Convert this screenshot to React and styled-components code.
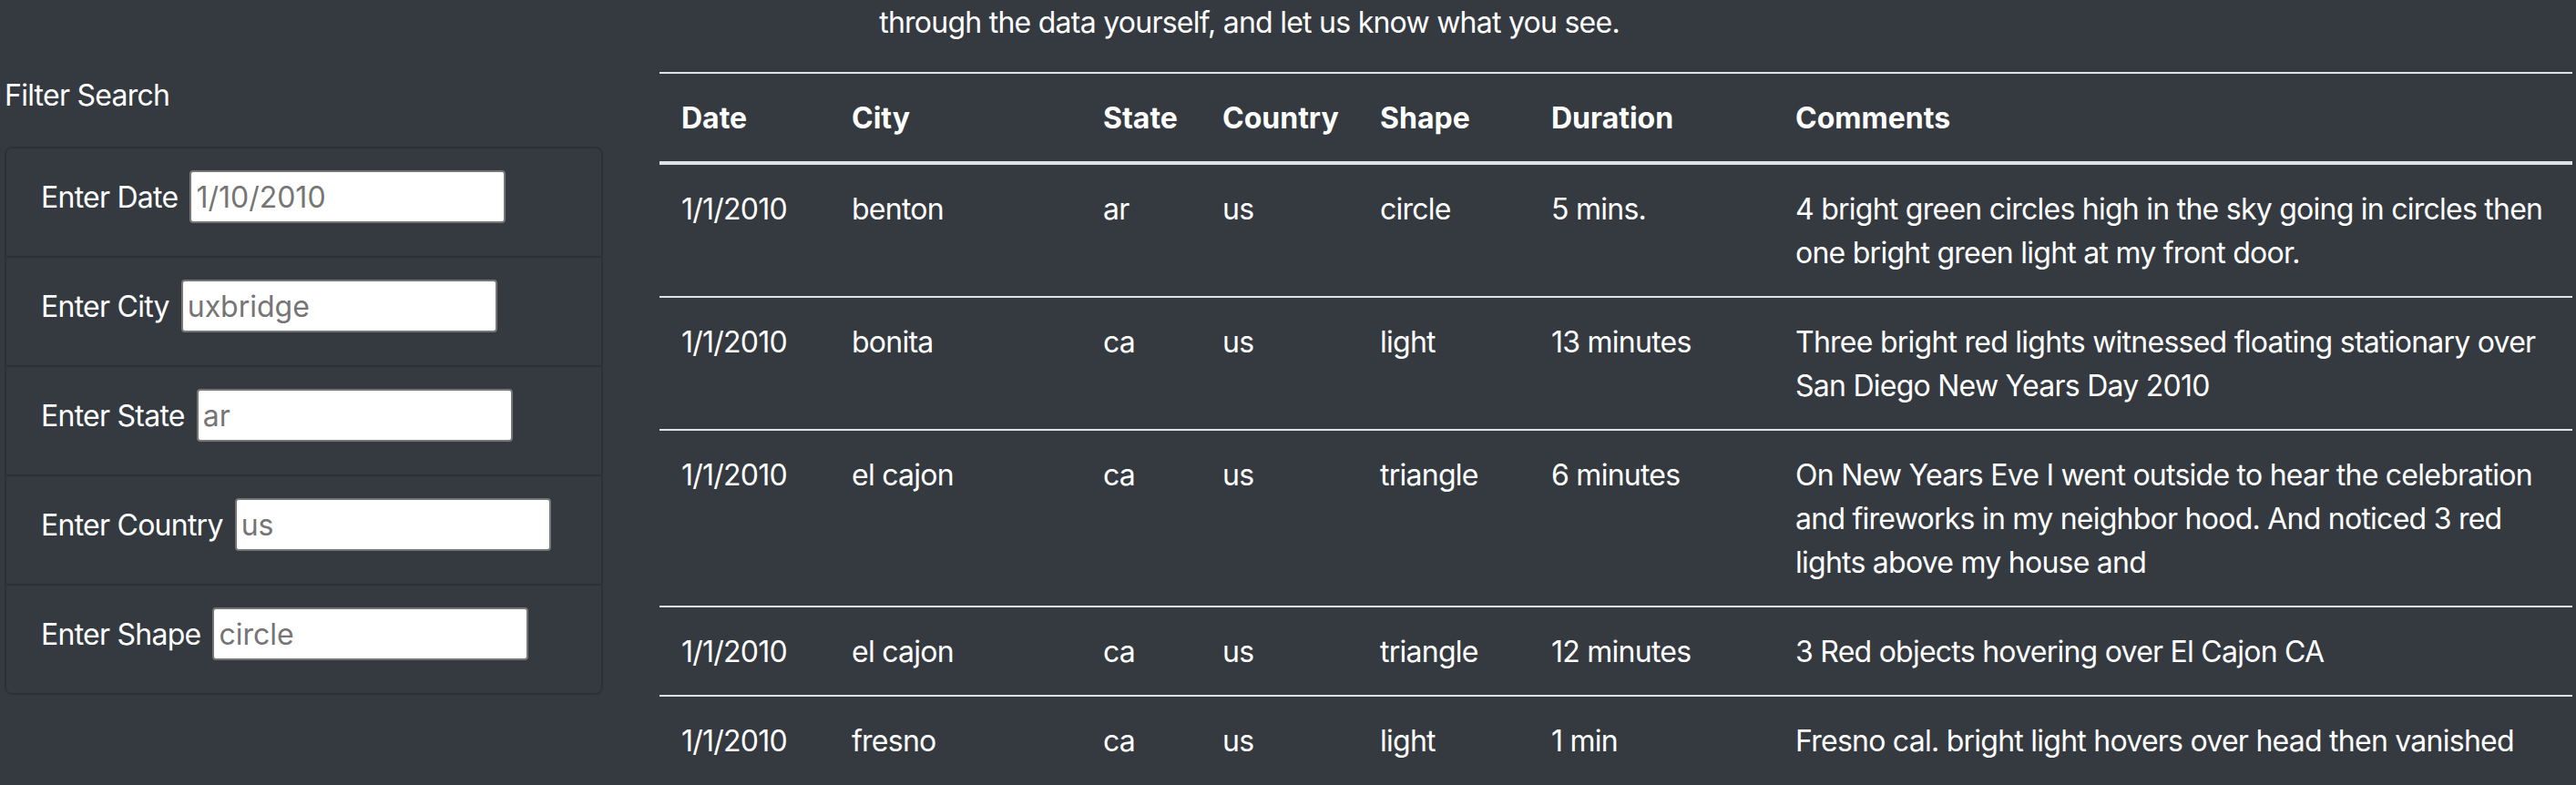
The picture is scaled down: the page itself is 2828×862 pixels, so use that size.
import React from "react";
import styled, { createGlobalStyle } from "styled-components";

const GlobalStyle = createGlobalStyle`
  html, body {
    margin: 0;
    background: #343a40;
    color: #fff;
    font-family: Inter, "Liberation Sans", sans-serif;
    font-size: 32px;
    line-height: 48px;
    letter-spacing: -0.75px;
  }
  * {
    box-sizing: border-box;
  }
`;

const filters = [
  { label: "Enter Date", placeholder: "1/10/2010" },
  { label: "Enter City", placeholder: "uxbridge" },
  { label: "Enter State", placeholder: "ar" },
  { label: "Enter Country", placeholder: "us" },
  { label: "Enter Shape", placeholder: "circle" },
];

const columns = [
  { title: "Date", width: 187 },
  { title: "City", width: 276 },
  { title: "State", width: 131 },
  { title: "Country", width: 173 },
  { title: "Shape", width: 188 },
  { title: "Duration", width: 268 },
  { title: "Comments", width: 877 },
];

const sightings = [
  ["1/1/2010", "benton", "ar", "us", "circle", "5 mins.", "4 bright green circles high in the sky going in circles then one bright green light at my front door."],
  ["1/1/2010", "bonita", "ca", "us", "light", "13 minutes", "Three bright red lights witnessed floating stationary over San Diego New Years Day 2010"],
  ["1/1/2010", "el cajon", "ca", "us", "triangle", "6 minutes", "On New Years Eve I went outside to hear the celebration and fireworks in my neighbor hood. And noticed 3 red lights above my house and"],
  ["1/1/2010", "el cajon", "ca", "us", "triangle", "12 minutes", "3 Red objects hovering over El Cajon CA"],
  ["1/1/2010", "fresno", "ca", "us", "light", "1 min", "Fresno cal. bright light hovers over head then vanished"],
];

export default function App() {
  return (
    <Page>
      <GlobalStyle />
      <Intro>through the data yourself, and let us know what you see.</Intro>
      <Layout>
        <Sidebar>
          <SidebarTitle>Filter Search</SidebarTitle>
          <FilterList>
            {filters.map(f => (
              <FilterItem key={f.label}>
                <label>{f.label}</label>
                <FilterInput type="text" placeholder={f.placeholder} />
              </FilterItem>
            ))}
          </FilterList>
        </Sidebar>
        <Table>
          <colgroup>
            {columns.map(c => (
              <col key={c.title} style={{ width: c.width }} />
            ))}
          </colgroup>
          <thead>
            <tr>
              {columns.map(c => (
                <th key={c.title}>{c.title}</th>
              ))}
            </tr>
          </thead>
          <tbody>
            {sightings.map((row, i) => (
              <tr key={i}>
                {row.map((cell, j) => (
                  <td key={j}>{cell}</td>
                ))}
              </tr>
            ))}
          </tbody>
        </Table>
      </Layout>
    </Page>
  );
}

const Page = styled.div`
  height: 862px;
  overflow: hidden;
  padding: 0 4px 0 5px;
`;

const Intro = styled.p`
  margin: 0 0 30px;
  padding: 1px 86px 0 0;
  text-align: center;
`;

const Layout = styled.div`
  display: grid;
  grid-template-columns: 657px 1fr;
  column-gap: 62px;
  align-items: start;
`;

const Sidebar = styled.aside`
  padding-top: 2px;
`;

const SidebarTitle = styled.div`
  margin-bottom: 32px;
`;

const FilterList = styled.div`
  border: 2px solid rgba(0, 0, 0, 0.14);
  border-radius: 8px;
`;

const FilterItem = styled.div`
  display: flex;
  align-items: baseline;
  gap: 13px;
  padding: 24px 38px 36px;
  & + & {
    border-top: 2px solid rgba(0, 0, 0, 0.14);
  }
  label {
    white-space: nowrap;
  }
`;

const FilterInput = styled.input`
  width: 347px;
  height: 58px;
  padding: 1px 5px;
  border: 2px solid #767676;
  border-radius: 4px;
  background: #fff;
  color: #222;
  font: inherit;
  line-height: normal;
  outline: none;
  &::placeholder {
    color: #757575;
  }
`;

const Table = styled.table`
  width: 100%;
  table-layout: fixed;
  border-collapse: collapse;
  color: #fff;
  th,
  td {
    padding: 25px 24px 23px;
    text-align: left;
    vertical-align: top;
    border-top: 2px solid #dee2e6;
  }
  th {
    font-weight: 700;
    letter-spacing: 0;
    vertical-align: bottom;
    border-bottom: 4px solid #dee2e6;
  }
`;
